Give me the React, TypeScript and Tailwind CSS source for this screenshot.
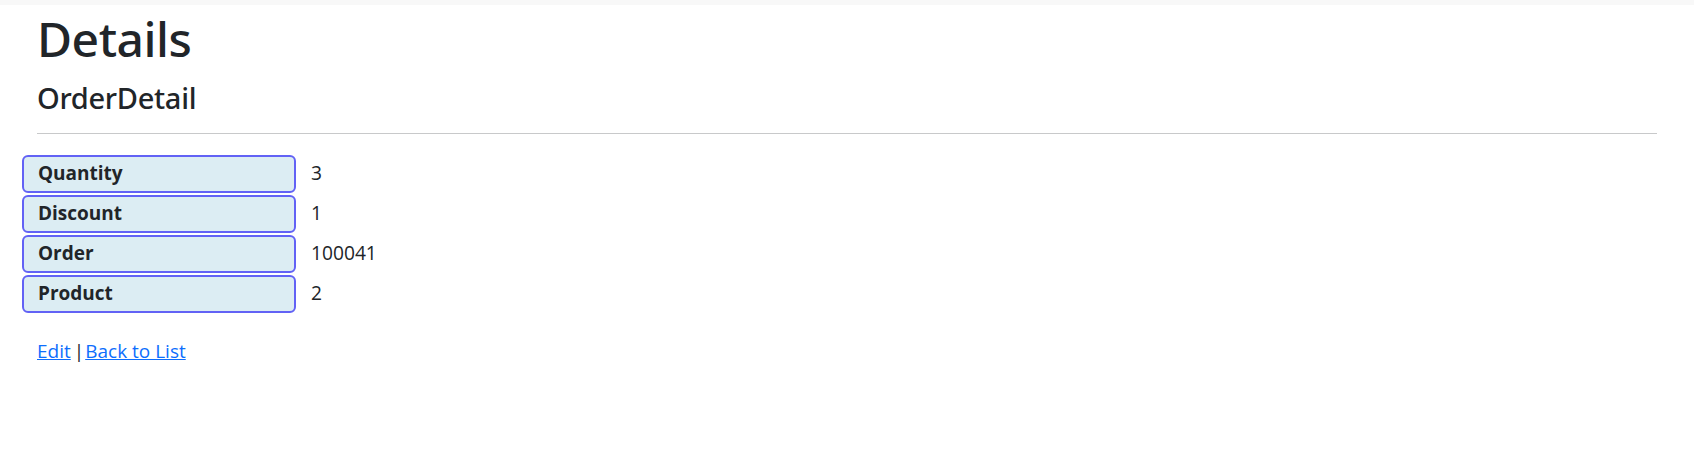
import React from "react"

const rows = [
  { label: "Quantity", value: "3" },
  { label: "Discount", value: "1" },
  { label: "Order", value: "100041" },
  { label: "Product", value: "2" },
]

export default function App() {
  return (
    <div className="min-h-[451px] bg-white text-[#212529] font-['Open_Sans','Noto_Sans',sans-serif]">
      {/* navbar shadow strip */}
      <div className="h-[5px] bg-[#f8f8f8]" />

      <main className="px-[37px] pt-[5px]">
        <h1 className="text-[48px] leading-[58px] font-medium font-['Noto_Sans',sans-serif] tracking-[-0.5px]">
          Details
        </h1>

        <div>
          <h4 className="mt-[12px] text-[29px] leading-[35px] font-medium font-['Noto_Sans',sans-serif] tracking-[-0.3px]">
            OrderDetail
          </h4>
          <hr className="mt-[18px] border-0 border-t border-[#c8c9ca]" />

          <dl className="-mx-[15px] mt-[21px] flex flex-col gap-[2px]">
            {rows.map((row) => (
              <div key={row.label} className="flex">
                <dt className="w-[274px] h-[38px] shrink-0 rounded-[6px] border-2 border-[#6262f5] bg-[#dcedf3] px-[14px] pt-[2px] text-[19px] leading-[29px] font-bold">
                  {row.label}
                </dt>
                <dd className="pl-[15px] pt-[3px] text-[19.2px] leading-[29px]">{row.value}</dd>
              </div>
            ))}
          </dl>
        </div>

        <div className="mt-[24px] text-[19px] leading-[29px]">
          <a href="#" className="text-[#0d6efd] underline">
            Edit
          </a>
          <span className="ml-[3px] mr-[1px]">|</span>
          <a href="#" className="text-[#0d6efd] underline">
            Back to List
          </a>
        </div>
      </main>
    </div>
  )
}
